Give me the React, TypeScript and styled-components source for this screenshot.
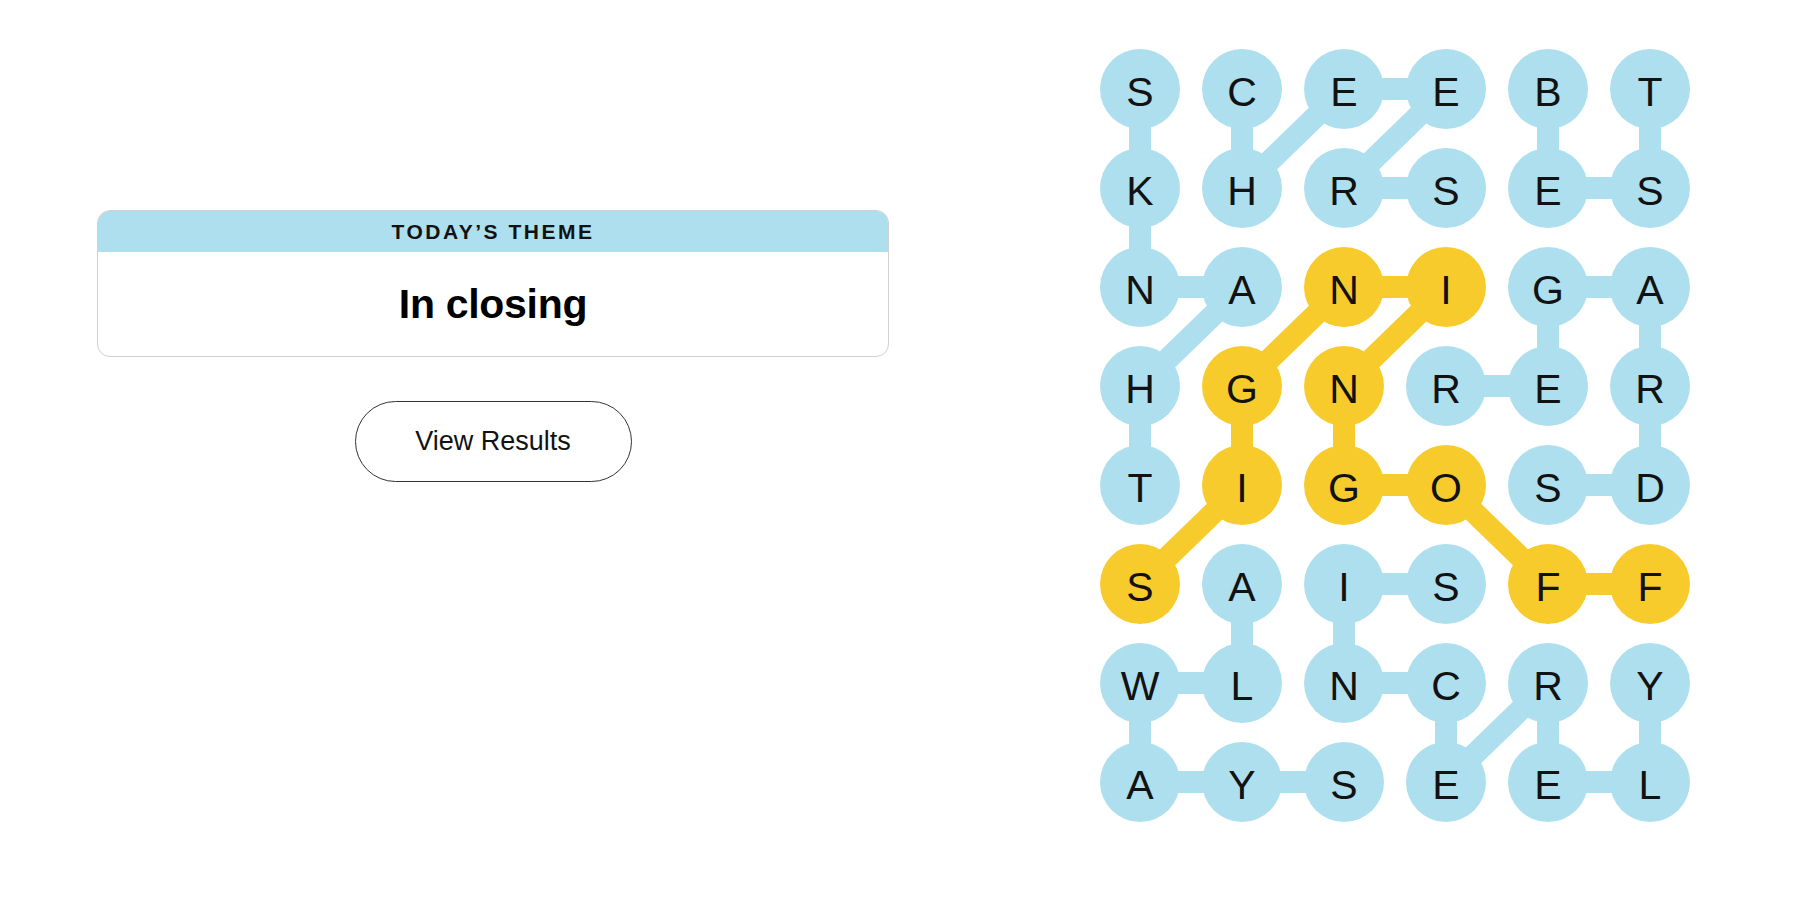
import React from "react";
import styled, { createGlobalStyle } from "styled-components";

const GlobalStyle = createGlobalStyle`
  html, body {
    margin: 0;
    padding: 0;
    background: #ffffff;
  }
  body {
    font-family: "Liberation Sans", Arial, sans-serif;
    color: #121212;
  }
`;

const BLUE = "#aedfee";
const GOLD = "#f8cb2c";

const COL_PITCH = 102;
const ROW_PITCH = 99;
const DOT = 80;

const LETTERS = [
  "SCEEBT",
  "KHRSES",
  "NANIGA",
  "HGNRER",
  "TIGOSD",
  "SAISFF",
  "WLNCRY",
  "AYSEEL",
];

type Cell = [number, number];

// Each found word as the ordered path of its cells [row, col].
const WORDS: { path: Cell[]; spangram?: boolean }[] = [
  { path: [[4, 0], [3, 0], [2, 1], [2, 0], [1, 0], [0, 0]] }, // THANKS
  { path: [[0, 1], [1, 1], [0, 2], [0, 3], [1, 2], [1, 3]] }, // CHEERS
  { path: [[0, 4], [1, 4], [1, 5], [0, 5]] }, // BEST
  { path: [[3, 3], [3, 4], [2, 4], [2, 5], [3, 5], [4, 5], [4, 4]] }, // REGARDS
  { path: [[5, 3], [5, 2], [6, 2], [6, 3], [7, 3], [6, 4], [7, 4], [7, 5], [6, 5]] }, // SINCERELY
  { path: [[5, 1], [6, 1], [6, 0], [7, 0], [7, 1], [7, 2]] }, // ALWAYS
  {
    path: [[5, 0], [4, 1], [3, 1], [2, 2], [2, 3], [3, 2], [4, 2], [4, 3], [5, 4], [5, 5]],
    spangram: true,
  }, // SIGNINGOFF
];

const spangramCells = new Set(
  WORDS.filter((w) => w.spangram).flatMap((w) => w.path.map(([r, c]) => `${r}-${c}`))
);

const Page = styled.main`
  display: flex;
  align-items: flex-start;
  width: 1800px;
  height: 900px;
  box-sizing: border-box;
  padding-left: 97px;
`;

const LeftColumn = styled.section`
  width: 792px;
  padding-top: 210px;
  display: flex;
  flex-direction: column;
  align-items: center;
`;

const ThemeCard = styled.div`
  width: 100%;
  box-sizing: border-box;
  border: 1.5px solid #d0d0d0;
  border-radius: 13px;
  overflow: hidden;
  background: #ffffff;
`;

const ThemeHeader = styled.div`
  height: 41px;
  background: ${BLUE};
  display: flex;
  align-items: center;
  justify-content: center;
  font-family: "Liberation Sans", Arial, sans-serif;
  font-size: 21px;
  font-weight: 700;
  letter-spacing: 2.5px;
  text-transform: uppercase;
  color: #121212;
`;

const ThemeBody = styled.div`
  height: 104px;
  display: flex;
  align-items: center;
  justify-content: center;
  font-family: "Liberation Sans", Arial, sans-serif;
  font-size: 41px;
  font-weight: 700;
  letter-spacing: -0.3px;
  color: #000000;
`;

const ResultsButton = styled.button`
  margin-top: 44px;
  width: 277px;
  height: 81px;
  border: 1.5px solid #333333;
  border-radius: 41px;
  background: #ffffff;
  font-family: "Liberation Sans", Arial, sans-serif;
  font-size: 27px;
  color: #121212;
  cursor: pointer;
  padding: 0;
`;

const Board = styled.div`
  position: relative;
  margin-left: 211px;
  margin-top: 49px;
  width: ${COL_PITCH * 5 + DOT}px;
  height: ${ROW_PITCH * 7 + DOT}px;
`;

const Links = styled.svg`
  position: absolute;
  inset: 0;
  width: 100%;
  height: 100%;
  z-index: 0;
`;

const LetterGrid = styled.div`
  position: relative;
  z-index: 1;
  display: grid;
  grid-template-columns: repeat(6, ${DOT}px);
  grid-auto-rows: ${DOT}px;
  column-gap: ${COL_PITCH - DOT}px;
  row-gap: ${ROW_PITCH - DOT}px;
`;

const Letter = styled.div<{ $gold: boolean }>`
  width: ${DOT}px;
  height: ${DOT}px;
  border-radius: 50%;
  background: ${(p) => (p.$gold ? GOLD : BLUE)};
  display: flex;
  align-items: center;
  justify-content: center;
  font-family: "Liberation Sans", Arial, sans-serif;
  font-size: 41px;
  font-weight: 400;
  line-height: 1;
  color: #121212;
  padding-top: 6px;
  box-sizing: border-box;
`;

const center = ([r, c]: Cell) => ({
  x: c * COL_PITCH + DOT / 2,
  y: r * ROW_PITCH + DOT / 2,
});

export default function App() {
  return (
    <>
      <GlobalStyle />
      <Page>
        <LeftColumn>
          <ThemeCard>
            <ThemeHeader>Today’s Theme</ThemeHeader>
            <ThemeBody>In closing</ThemeBody>
          </ThemeCard>
          <ResultsButton type="button">View Results</ResultsButton>
        </LeftColumn>
        <Board>
          <Links viewBox={`0 0 ${COL_PITCH * 5 + DOT} ${ROW_PITCH * 7 + DOT}`}>
            {WORDS.map((w, wi) => (
              <polyline
                key={wi}
                points={w.path
                  .map((cell) => {
                    const p = center(cell);
                    return `${p.x},${p.y}`;
                  })
                  .join(" ")}
                fill="none"
                stroke={w.spangram ? GOLD : BLUE}
                strokeWidth={22}
                strokeLinejoin="round"
                strokeLinecap="round"
              />
            ))}
          </Links>
          <LetterGrid>
            {LETTERS.flatMap((row, r) =>
              row.split("").map((ch, c) => (
                <Letter key={`${r}-${c}`} $gold={spangramCells.has(`${r}-${c}`)}>
                  {ch}
                </Letter>
              ))
            )}
          </LetterGrid>
        </Board>
      </Page>
    </>
  );
}
